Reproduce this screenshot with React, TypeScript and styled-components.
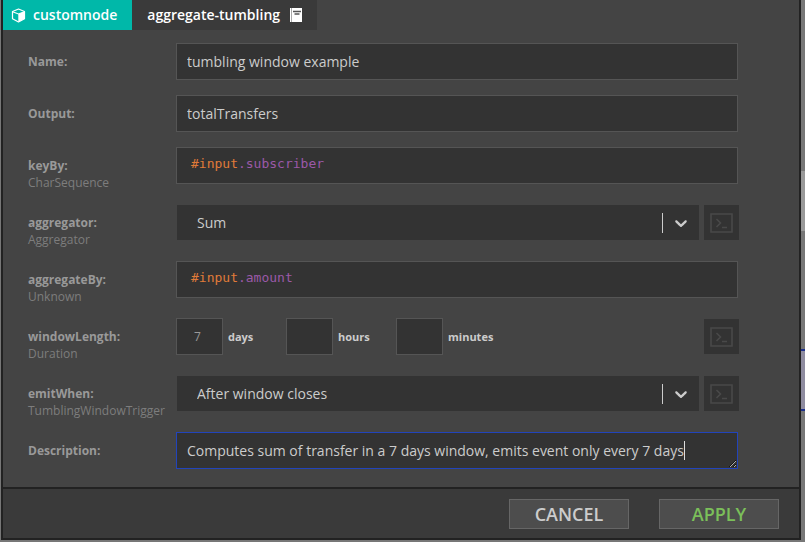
import React, { useState } from "react";
import styled, { createGlobalStyle } from "styled-components";

const GlobalStyle = createGlobalStyle`
  *, *::before, *::after { box-sizing: border-box; }
  body {
    margin: 0;
    background: #777777;
    color: #cccccc;
    font-family: "Open Sans", "Noto Sans", sans-serif;
    font-size: 14px;
  }
  button, input, select, textarea { font: inherit; color: inherit; margin: 0; }
`;

const Page = styled.div`
  display: flex;
  min-height: 100vh;
  padding: 0 0 2px 1px;
`;

const Dialog = styled.form`
  flex: 1;
  min-width: 0;
  display: flex;
  flex-direction: column;
  background: #444444;
  border: solid #222222;
  border-width: 0 2px 2px;
`;

const Header = styled.header`
  display: flex;
  height: 30px;
`;

const Tab = styled.div<{ $kind: "type" | "name" }>`
  display: flex;
  align-items: center;
  gap: ${(p) => (p.$kind === "type" ? 7 : 10)}px;
  padding: ${(p) => (p.$kind === "type" ? "0 15px 0 8px" : "0 14px 0 15px")};
  background: ${(p) => (p.$kind === "type" ? "#00b8a9" : "#3a3a3a")};
  color: #ffffff;
  font-weight: 600;
  line-height: 28px;
`;

const DocsLink = styled.a`
  display: flex;
  color: #ffffff;
`;

const Body = styled.div`
  flex: 1;
  display: flex;
  flex-direction: column;
  gap: 13px;
  padding: 13px 61px 16px 25px;
`;

const Row = styled.div<{ $typed?: boolean }>`
  display: grid;
  grid-template-columns: 148px minmax(0, 1fr);
  min-height: ${(p) => (p.$typed ? 44 : 39)}px;
  align-items: start;
`;

const Label = styled.label`
  padding-top: 10px;
  color: #999999;
  font-size: 12px;
  font-weight: 700;
  line-height: 17px;
  white-space: nowrap;
`;

const TypeName = styled.span`
  display: block;
  color: #7d7d7d;
  font-weight: 400;
`;

const TextField = styled.input`
  width: 100%;
  height: 37px;
  padding: 0 10px;
  background: #333333;
  border: 1px solid #555555;
  border-radius: 0;
  outline: none;
`;

const Expression = styled.div`
  height: 37px;
  padding: 7px 14px;
  background: #333333;
  border: 1px solid #555555;
  outline: none;
  color: #9b59a8;
  font-family: "DejaVu Sans Mono", monospace;
  font-size: 13px;
  line-height: 18px;
  white-space: pre;
`;

const Variable = styled.span`
  color: #e07b39;
`;

const ControlLine = styled.div`
  display: flex;
  align-items: center;
  gap: 5px;
  min-height: 37px;
  margin: 0 -1px 0 1px;
`;

const SelectBox = styled.div`
  flex: 1;
  display: grid;
  align-items: center;
  background: #333333;
`;

const Select = styled.select`
  grid-area: 1 / 1;
  width: 100%;
  height: 35px;
  padding: 0 60px 0 20px;
  appearance: none;
  background: transparent;
  border: 0;
  border-radius: 0;
  outline: none;
  option { background: #333333; }
`;

const Indicator = styled.span`
  grid-area: 1 / 1;
  justify-self: end;
  display: flex;
  align-items: center;
  padding: 0 8px;
  height: 20px;
  border-left: 1px solid #cccccc;
  pointer-events: none;
`;

const ExpressionToggle = styled.button`
  display: flex;
  align-items: center;
  justify-content: center;
  width: 35px;
  height: 35px;
  padding: 0;
  background: #333333;
  border: 0;
`;

const Durations = styled.div`
  flex: 1;
  display: flex;
  margin-left: -1px;
`;

const Duration = styled.label`
  display: flex;
  align-items: center;
  gap: 5px;
  width: 110px;
  font-size: 11px;
  font-weight: 700;
`;

const DurationInput = styled(TextField)`
  width: 47px;
  padding: 0 4px 0 0;
  color: #999999;
  font-size: 12px;
  font-weight: 400;
  text-align: center;
`;

const AreaBox = styled.div`
  position: relative;
  display: flex;
`;

const TextArea = styled.textarea`
  width: 100%;
  height: 37px;
  min-height: 37px;
  padding: 8px 10px;
  background: #333333;
  border: 1px solid #2244bb;
  border-radius: 0;
  outline: none;
  line-height: 19px;
  resize: vertical;
  overflow: hidden;
`;

const Caret = styled.span`
  position: absolute;
  left: 508px;
  top: 9px;
  width: 1px;
  height: 19px;
  background: #dddddd;
`;

const Footer = styled.footer`
  display: flex;
  justify-content: flex-end;
  gap: 30px;
  padding: 10px 20px 9px;
  background: #3a3a3a;
  border-top: 2px solid #222222;
`;

const Action = styled.button<{ $primary?: boolean }>`
  width: 120px;
  height: 30px;
  padding: 0;
  background: #4d4d4d;
  border: 1px solid #666666;
  color: ${(p) => (p.$primary ? "#7bbf5a" : "#cccccc")};
  font-size: 18px;
  font-weight: 600;
  line-height: 28px;
  text-transform: uppercase;
`;

const Canvas = styled.div`
  width: 4px;
  display: flex;
  flex-direction: column;
  padding-top: 171px;
`;

const Scrolled = styled.div`
  height: 60px;
  margin-bottom: 118px;
  background: #999999;
`;

const CanvasNode = styled.div`
  height: 62px;
  background: #8f8ca0;
  border: solid #1c2f8a;
  border-width: 2px 0;
`;

const CubeIcon = () => (
  <svg width="15" height="15" viewBox="0 0 15 15" aria-hidden="true">
    <path d="M7.5 1 L13.5 3.5 V10.8 L7.5 14 L1.5 10.8 V3.5 Z" fill="none" stroke="#fff" strokeWidth="1.2" strokeLinejoin="round" />
    <path d="M1.5 3.7 L7.5 6 L13.5 3.7" fill="none" stroke="#fff" strokeWidth="1.1" />
    <path d="M7.3 6 L13.5 3.6 V10.8 L7.3 14 Z" fill="#fff" />
  </svg>
);

const BookIcon = () => (
  <svg width="13" height="14" viewBox="0 0 13 14" aria-hidden="true">
    <path d="M0 0H12V14H0Z" fill="#fff" />
    <path d="M1.5 0V14" stroke="#aaa" strokeWidth="1" />
    <path d="M3 3.5H11M4.5 6H9.5" stroke="#555" strokeWidth="1.4" />
  </svg>
);

const ChevronIcon = () => (
  <svg width="20" height="20" viewBox="0 0 20 20" aria-hidden="true">
    <path
      fill="#ccc"
      d="M4.516 7.548c0.436-0.446 1.043-0.481 1.576 0l3.908 3.747 3.908-3.747c0.533-0.481 1.141-0.446 1.574 0 0.436 0.445 0.408 1.197 0 1.615-0.406 0.418-4.695 4.502-4.695 4.502-0.217 0.223-0.502 0.335-0.787 0.335s-0.57-0.112-0.789-0.335c0 0-4.287-4.084-4.695-4.502s-0.436-1.17 0-1.615z"
    />
  </svg>
);

const TerminalIcon = () => (
  <svg width="23" height="20" viewBox="0 0 23 20" fill="none" stroke="#494949" aria-hidden="true">
    <path d="M1 1H22V19H1Z" strokeWidth="1.6" />
    <path d="M6.5 6L10.5 10L6.5 14" strokeWidth="1.6" />
    <path d="M12 14.5H17" strokeWidth="1.6" />
  </svg>
);

const Toggle = ({ name }: { name: string }) => (
  <ExpressionToggle type="button" aria-label={`Edit ${name} as expression`}>
    <TerminalIcon />
  </ExpressionToggle>
);

const TextRow = ({ id, label, value }: { id: string; label: string; value: string }) => (
  <Row>
    <Label htmlFor={id}>{label}:</Label>
    <TextField id={id} defaultValue={value} spellCheck={false} />
  </Row>
);

const ExpressionRow = ({ name, type, field }: { name: string; type: string; field: string }) => (
  <Row $typed>
    <Label as="div" id={name}>
      {name}:<TypeName>{type}</TypeName>
    </Label>
    <Expression role="textbox" aria-labelledby={name} contentEditable suppressContentEditableWarning spellCheck={false}>
      <Variable>#input</Variable>.{field}
    </Expression>
  </Row>
);

const SelectRow = ({ name, type, options }: { name: string; type: string; options: string[] }) => (
  <Row $typed>
    <Label htmlFor={name}>
      {name}:<TypeName>{type}</TypeName>
    </Label>
    <ControlLine>
      <SelectBox>
        <Select id={name}>
          {options.map((o) => (
            <option key={o}>{o}</option>
          ))}
        </Select>
        <Indicator>
          <ChevronIcon />
        </Indicator>
      </SelectBox>
      <Toggle name={name} />
    </ControlLine>
  </Row>
);

const units = [
  { unit: "days", value: "7" },
  { unit: "hours", value: "" },
  { unit: "minutes", value: "" },
];

export default function App() {
  const initial = "Computes sum of transfer in a 7 days window, emits event only every 7 days";
  const [description, setDescription] = useState(initial);

  return (
    <>
      <GlobalStyle />
      <Page>
        <Dialog onSubmit={(e) => e.preventDefault()}>
          <Header>
            <Tab $kind="type">
              <CubeIcon />
              customnode
            </Tab>
            <Tab $kind="name">
              aggregate-tumbling
              <DocsLink href="#docs" aria-label="Documentation">
                <BookIcon />
              </DocsLink>
            </Tab>
          </Header>
          <Body>
            <TextRow id="name" label="Name" value="tumbling window example" />
            <TextRow id="output" label="Output" value="totalTransfers" />
            <ExpressionRow name="keyBy" type="CharSequence" field="subscriber" />
            <SelectRow name="aggregator" type="Aggregator" options={["Sum"]} />
            <ExpressionRow name="aggregateBy" type="Unknown" field="amount" />
            <Row $typed>
              <Label as="div" id="windowLength">
                windowLength:<TypeName>Duration</TypeName>
              </Label>
              <ControlLine>
                <Durations role="group" aria-labelledby="windowLength">
                  {units.map(({ unit, value }) => (
                    <Duration key={unit}>
                      <DurationInput defaultValue={value} inputMode="numeric" />
                      {unit}
                    </Duration>
                  ))}
                </Durations>
                <Toggle name="windowLength" />
              </ControlLine>
            </Row>
            <SelectRow name="emitWhen" type="TumblingWindowTrigger" options={["After window closes"]} />
            <Row>
              <Label htmlFor="description">Description:</Label>
              <AreaBox>
                <TextArea
                  id="description"
                  rows={1}
                  spellCheck={false}
                  value={description}
                  onChange={(e) => setDescription(e.target.value)}
                />
                {description === initial && <Caret />}
              </AreaBox>
            </Row>
          </Body>
          <Footer>
            <Action type="button">Cancel</Action>
            <Action type="submit" $primary>
              Apply
            </Action>
          </Footer>
        </Dialog>
        <Canvas aria-hidden="true">
          <Scrolled />
          <CanvasNode />
        </Canvas>
      </Page>
    </>
  );
}
